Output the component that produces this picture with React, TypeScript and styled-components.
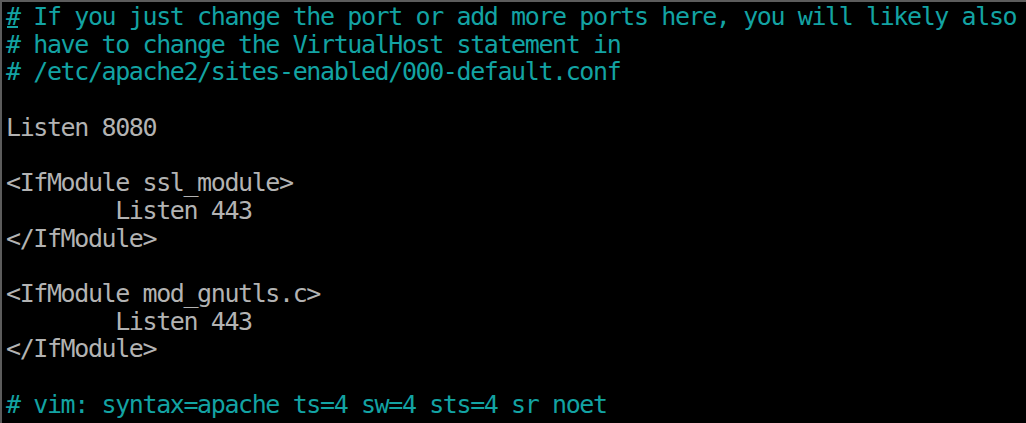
import React from "react";
import styled, { createGlobalStyle } from "styled-components";

const Global = createGlobalStyle`
  html, body {
    margin: 0;
    padding: 0;
    background: #000;
  }
  #root {
    width: 1026px;
    height: 423px;
    overflow: hidden;
  }
`;

const Terminal = styled.div`
  box-sizing: border-box;
  width: 1026px;
  height: 423px;
  background: #000;
  border-top: 2px solid #5c5c5c;
  border-left: 2px solid #5c5c5c;
  padding: 1px 0 0 4px;
  display: flex;
  flex-direction: column;
  font-family: "DejaVu Sans Mono", "Liberation Mono", monospace;
  font-size: 25px;
  letter-spacing: -1.4px;
  line-height: 27.7px;
  white-space: pre;
`;

type Tone = "comment" | "text";

const Line = styled.div<{ $tone: Tone }>`
  height: 27.7px;
  color: ${(p) => (p.$tone === "comment" ? "#13a3a3" : "#b3b3b3")};
`;

const Cursor = styled.span`
  position: relative;
  &::after {
    content: "";
    position: absolute;
    left: 1px;
    right: 2px;
    bottom: 3px;
    height: 2px;
    background: #13a3a3;
  }
`;

const lines: { tone: Tone; text: string }[] = [
  { tone: "comment", text: "# If you just change the port or add more ports here, you will likely also" },
  { tone: "comment", text: "# have to change the VirtualHost statement in" },
  { tone: "comment", text: "# /etc/apache2/sites-enabled/000-default.conf" },
  { tone: "text", text: "" },
  { tone: "text", text: "Listen 8080" },
  { tone: "text", text: "" },
  { tone: "text", text: "<IfModule ssl_module>" },
  { tone: "text", text: "        Listen 443" },
  { tone: "text", text: "</IfModule>" },
  { tone: "text", text: "" },
  { tone: "text", text: "<IfModule mod_gnutls.c>" },
  { tone: "text", text: "        Listen 443" },
  { tone: "text", text: "</IfModule>" },
  { tone: "text", text: "" },
  { tone: "comment", text: "# vim: syntax=apache ts=4 sw=4 sts=4 sr noet" },
];

export default function App() {
  return (
    <>
      <Global />
      <Terminal>
        {lines.map((l, i) => (
          <Line key={i} $tone={l.tone}>
            {i === 0 ? (
              <>
                <Cursor>#</Cursor>
                {l.text.slice(1)}
              </>
            ) : (
              l.text || " "
            )}
          </Line>
        ))}
      </Terminal>
    </>
  );
}
